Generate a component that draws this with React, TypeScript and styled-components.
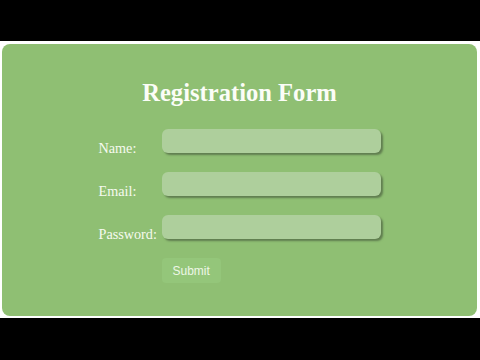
import React from 'react';
import styled, { createGlobalStyle } from 'styled-components';

const GlobalStyle = createGlobalStyle`
  html, body {
    margin: 0;
    padding: 0;
    background: #000;
  }
  * {
    box-sizing: border-box;
  }
`;

const Screen = styled.div`
  width: 480px;
  height: 360px;
  display: flex;
  flex-direction: column;
  background: #000;
`;

const Page = styled.div`
  margin-top: 41px;
  height: 277px;
  background: #fff;
  padding: 3px 3px 2px 2px;
  display: flex;
`;

const Card = styled.div`
  flex: 1;
  background: #8fbf73;
  border-radius: 8px;
  padding-top: 34px;
  display: flex;
  flex-direction: column;
  align-items: center;
`;

const Title = styled.h2`
  margin: 0;
  font-family: "Liberation Serif", "Times New Roman", serif;
  font-weight: bold;
  font-size: 24.6px;
  line-height: 30px;
  color: #fbfdf7;
`;

const Form = styled.form`
  margin-top: 21px;
  display: grid;
  grid-template-columns: 63px 219px;
  grid-template-rows: 24px 24px 24px 25px;
  row-gap: 19px;
`;

const Label = styled.label`
  height: 24px;
  padding-top: 11px;
  font-family: "Liberation Serif", "Times New Roman", serif;
  font-size: 14.2px;
  line-height: 16px;
  color: #f6faef;
  white-space: nowrap;
`;

const Input = styled.input`
  width: 219px;
  height: 24px;
  border: none;
  outline: none;
  border-radius: 6px;
  background: #aecf9c;
  box-shadow: 2px 2px 2px rgba(70, 90, 60, 0.65);
  padding: 0 8px;
`;

const SubmitButton = styled.button`
  grid-column: 2;
  justify-self: start;
  height: 25px;
  padding: 0 11px;
  border: none;
  border-radius: 4px;
  background: #94c67a;
  color: #eef6e6;
  font-family: "Liberation Sans", Arial, sans-serif;
  font-size: 12px;
  cursor: pointer;
`;

const fields = [
  { id: 'name', label: 'Name:', type: 'text' },
  { id: 'email', label: 'Email:', type: 'email' },
  { id: 'password', label: 'Password:', type: 'password' },
];

const App: React.FC = () => {
  return (
    <Screen>
      <GlobalStyle />
      <Page>
        <Card>
          <Title>Registration Form</Title>
          <Form onSubmit={(e) => e.preventDefault()}>
            {fields.map((f) => (
              <React.Fragment key={f.id}>
                <Label htmlFor={f.id}>{f.label}</Label>
                <Input id={f.id} type={f.type} />
              </React.Fragment>
            ))}
            <SubmitButton type="submit">Submit</SubmitButton>
          </Form>
        </Card>
      </Page>
    </Screen>
  );
};

export default App;
